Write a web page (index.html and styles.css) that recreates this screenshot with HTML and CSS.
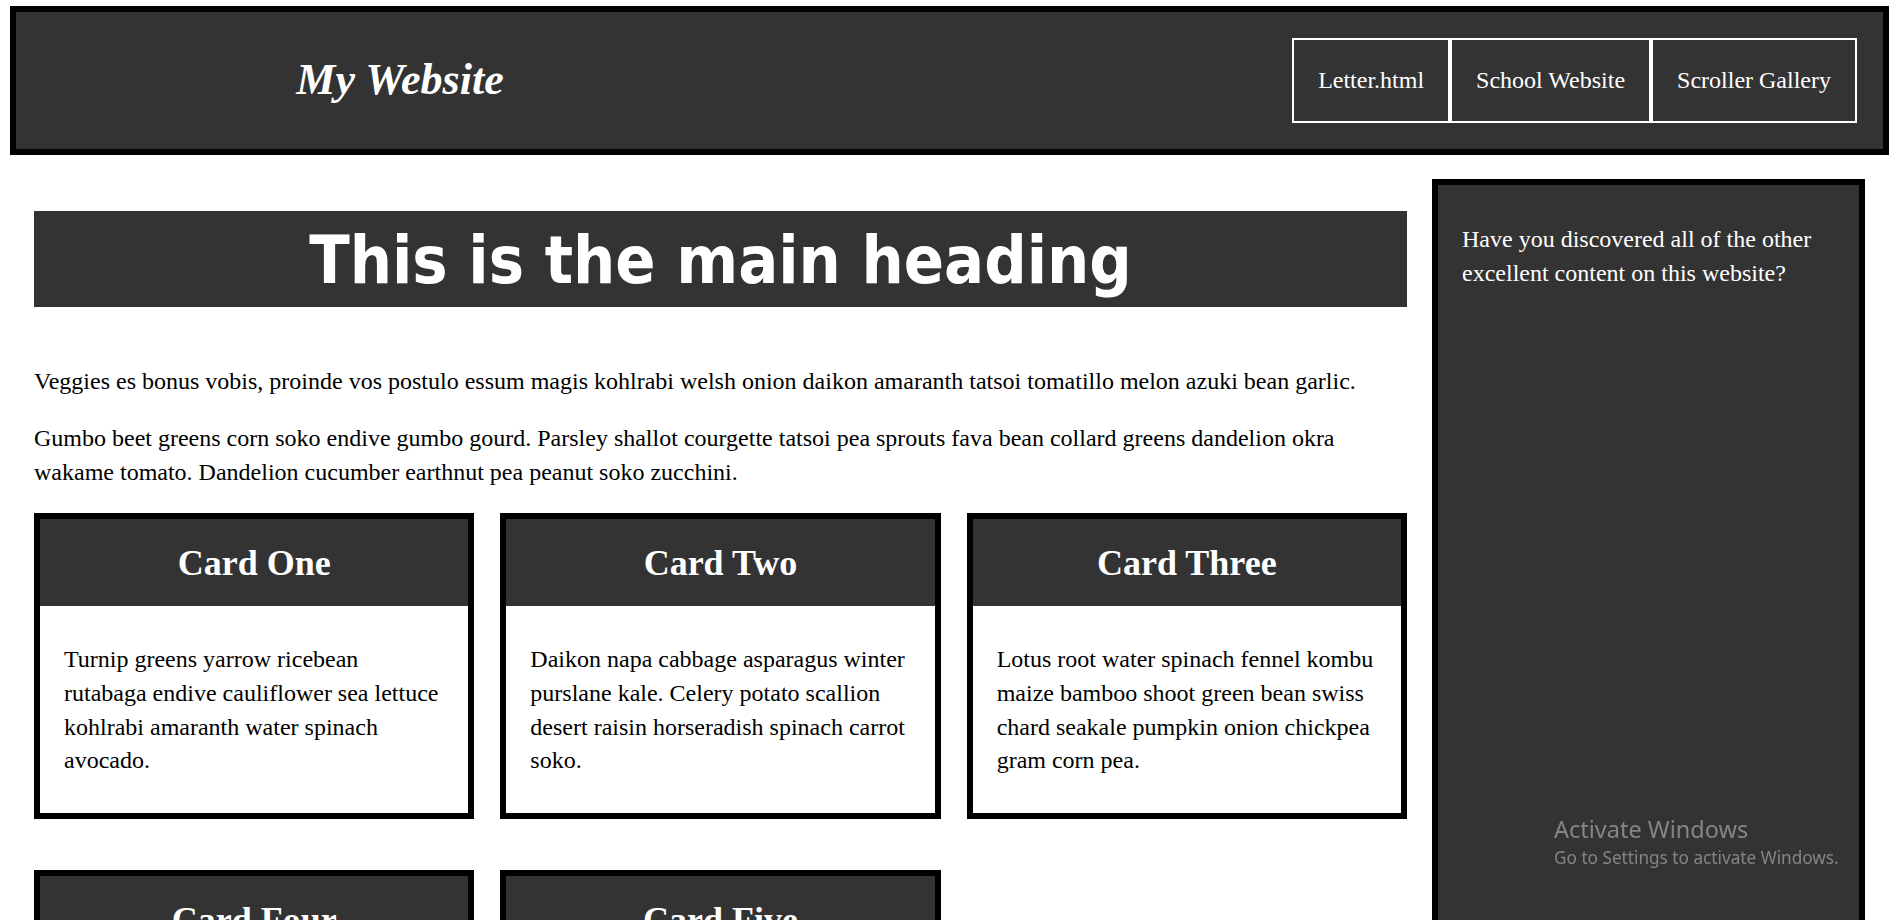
FILE: index.html
```html
<!DOCTYPE html>
<html lang="en">
<head>
<meta charset="utf-8">
<title>My Website</title>
<link rel="stylesheet" href="styles.css">
</head>
<body>
<header class="site-header">
  <div class="logo">My Website</div>
  <nav class="nav">
    <a class="nav-link" href="#">Letter.html</a>
    <a class="nav-link" href="#">School Website</a>
    <a class="nav-link" href="#">Scroller Gallery</a>
  </nav>
</header>
<div class="content">
  <main class="main">
    <h1 class="main-heading">This is the main heading</h1>
    <p class="para">Veggies es bonus vobis, proinde vos postulo essum magis kohlrabi welsh onion daikon amaranth tatsoi tomatillo melon azuki bean garlic.</p>
    <p class="para">Gumbo beet greens corn soko endive gumbo gourd. Parsley shallot courgette tatsoi pea sprouts fava bean collard greens dandelion okra wakame tomato. Dandelion cucumber earthnut pea peanut soko zucchini.</p>
    <div class="cards">
      <article class="card">
        <h2 class="card-title">Card One</h2>
        <div class="card-body"><p>Turnip greens yarrow ricebean rutabaga endive cauliflower sea lettuce kohlrabi amaranth water spinach avocado.</p></div>
      </article>
      <article class="card">
        <h2 class="card-title">Card Two</h2>
        <div class="card-body"><p>Daikon napa cabbage asparagus winter purslane kale. Celery potato scallion desert raisin horseradish spinach carrot soko.</p></div>
      </article>
      <article class="card">
        <h2 class="card-title">Card Three</h2>
        <div class="card-body"><p>Lotus root water spinach fennel kombu maize bamboo shoot green bean swiss chard seakale pumpkin onion chickpea gram corn pea.</p></div>
      </article>
      <article class="card">
        <h2 class="card-title">Card Four</h2>
        <div class="card-body"><p>Brussels sprout coriander water chestnut gourd swiss chard wakame kohlrabi beetroot carrot watercress.</p></div>
      </article>
      <article class="card">
        <h2 class="card-title">Card Five</h2>
        <div class="card-body"><p>Corn amaranth salsify bunya nuts nori azuki bean chickweed potato bell pepper artichoke.</p></div>
      </article>
    </div>
  </main>
  <aside class="sidebar">
    <p>Have you discovered all of the other excellent content on this website?</p>
  </aside>
</div>
<div class="activate">
  <div class="activate-title">Activate Windows</div>
  <div class="activate-sub">Go to Settings to activate Windows.</div>
</div>
</body>
</html>
```

FILE: styles.css
```css
html, body {
  height: 100%;
}
body {
  margin: 0;
  background: #fff;
  color: #000;
  font-family: "Liberation Serif", "Times New Roman", serif;
  font-size: 24px;
  line-height: 1.4;
  overflow: hidden;
}

.site-header {
  margin: 6px 6px 0 10px;
  border: 6px solid #000;
  background: #333;
  display: flex;
  align-items: center;
  justify-content: space-between;
  padding: 25.5px 26px 25.5px 0;
}

.logo {
  width: 768px;
  text-align: center;
  color: #fff;
  font-size: 44px;
  font-weight: bold;
  font-style: italic;
  line-height: 1.2;
}

.nav {
  display: flex;
}

.nav-link {
  display: block;
  border: 2px solid #fff;
  padding: 24px 24px;
  color: #fff;
  text-decoration: none;
  font-size: 24px;
  line-height: 1.4;
}

.content {
  margin: 0 6px 0 10px;
  padding: 24px 24px 0;
  display: grid;
  grid-template-columns: 1373px 1fr;
  column-gap: 25px;
}

.main-heading {
  margin: 32px 0 58px;
  height: 96px;
  background: #333;
  color: #fff;
  text-align: center;
  font-family: "Comic Sans MS", "DejaVu Sans Condensed", "DejaVu Sans", sans-serif;
  font-stretch: condensed;
  font-weight: bold;
  font-size: 66px;
  line-height: 100px;
}

.para {
  margin: 24px 0;
}

.cards {
  display: grid;
  grid-template-columns: repeat(3, 1fr);
  column-gap: 26px;
  row-gap: 51px;
}

.card {
  border: 6px solid #000;
  background: #fff;
}

.card-title {
  margin: 0;
  background: #333;
  color: #fff;
  text-align: center;
  font-size: 36px;
  font-weight: bold;
  line-height: 51px;
  padding: 19px 10px 17px;
}

.card-body {
  padding: 13px 24px 11px;
}

.card-body p {
  margin: 24px 0;
}

.sidebar {
  border: 6px solid #000;
  background: #333;
  color: #fff;
  padding: 13px 24px;
  min-height: 900px;
}

.sidebar p {
  margin: 24px 0;
  line-height: 34px;
}

.activate {
  position: fixed;
  left: 1554px;
  top: 813px;
  font-family: "Noto Sans", "Open Sans", sans-serif;
  color: #858585;
  pointer-events: none;
}

.activate-title {
  font-size: 23.5px;
  line-height: 32px;
}

.activate-sub {
  font-size: 17.2px;
  line-height: 26px;
}
```
